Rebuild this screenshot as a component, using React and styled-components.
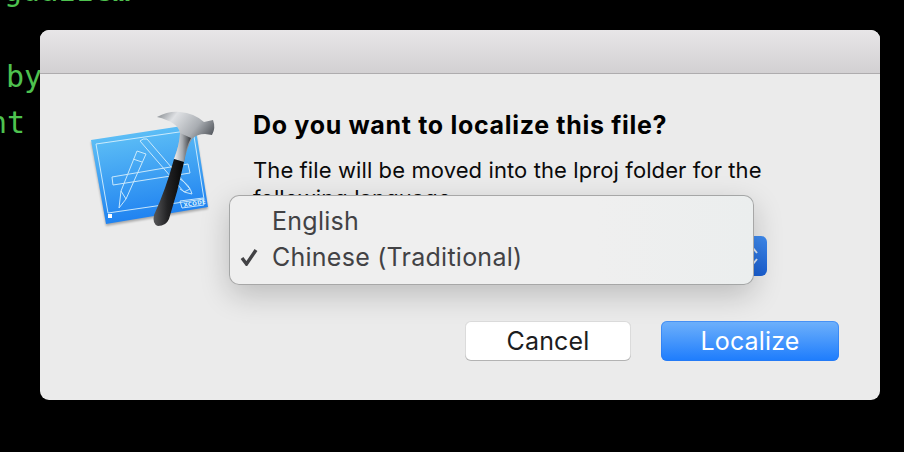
import React from "react";
import styled, { createGlobalStyle } from "styled-components";

const Global = createGlobalStyle`
  html, body { margin: 0; padding: 0; background: #000; }
  body { font-family: Inter, "Liberation Sans", sans-serif; }
`;

const Screen = styled.div`
  position: relative;
  width: 904px;
  height: 452px;
  overflow: hidden;
  background: #000;
  padding: 30px 24px 0 40px;
  box-sizing: border-box;
`;

const CodeLine = styled.div`
  position: absolute;
  left: ${(p) => p.$x}px;
  top: ${(p) => p.$y}px;
  font-family: "DejaVu Sans Mono", monospace;
  font-size: 30px;
  line-height: 32px;
  color: #4ec24f;
  white-space: pre;
`;

const Dialog = styled.div`
  position: relative;
  width: 840px;
  height: 370px;
  border-radius: 9px;
  overflow: hidden;
  background: #ebebeb;
  display: flex;
  flex-direction: column;
`;

const TitleBar = styled.div`
  height: 44px;
  flex: none;
  box-sizing: border-box;
  background: linear-gradient(#e8e6e8, #d2d0d2);
  border-bottom: 1px solid #aeacae;
`;

const Body = styled.div`
  flex: 1;
  display: flex;
  padding: 36px 41px 39px 50px;
  min-height: 0;
`;

const IconColumn = styled.div`
  width: 163px;
  flex: none;
`;

const Content = styled.div`
  flex: 1;
  display: flex;
  flex-direction: column;
  min-width: 0;
`;

const Heading = styled.h1`
  margin: 0;
  font-size: 25px;
  line-height: 30px;
  font-weight: 700;
  color: #000;
  letter-spacing: 0.68px;
`;

const Message = styled.p`
  margin: 16px 0 0;
  width: 530px;
  font-size: 22px;
  line-height: 28px;
  color: #0a0a0a;
  letter-spacing: 0.1px;
`;

const Buttons = styled.div`
  margin-top: auto;
  display: flex;
  justify-content: flex-end;
  gap: 30px;
`;

const Button = styled.div`
  width: ${(p) => p.$w}px;
  height: 40px;
  box-sizing: border-box;
  border-radius: 6px;
  display: flex;
  align-items: center;
  justify-content: center;
  font-size: 25px;
  letter-spacing: 0.15px;
  background: ${(p) => (p.$primary ? "linear-gradient(#6fb1fb, #1d7cfd)" : "#fff")};
  color: ${(p) => (p.$primary ? "#fff" : "#1c1c20")};
  box-shadow: ${(p) =>
    p.$primary
      ? "inset 0 0 0 1px rgba(40,120,240,.55)"
      : "inset 0 0 0 1px rgba(0,0,0,.14), inset 0 -1px 0 rgba(0,0,0,.18)"};
`;

const Stepper = styled.div`
  position: absolute;
  left: 690px;
  top: 206px;
  width: 37px;
  height: 40px;
  border-radius: 6px;
  background: linear-gradient(#3f8bf0, #1a5fd2);
  display: flex;
  align-items: center;
  justify-content: flex-end;
  padding-right: 8px;
  box-sizing: border-box;
`;

const Menu = styled.div`
  position: absolute;
  left: 189px;
  top: 165px;
  width: 525px;
  height: 90px;
  box-sizing: border-box;
  padding-top: 7px;
  border-radius: 10px;
  background: linear-gradient(90deg, #efefef 70%, #ebeeee);
  border: 1px solid rgba(0, 0, 0, 0.3);
  box-shadow: 0 10px 30px rgba(0, 0, 0, 0.2);
`;

const MenuItem = styled.div`
  display: flex;
  align-items: center;
  height: 36px;
  font-size: 25px;
  letter-spacing: 0.25px;
  color: #424245;
`;

const CheckSlot = styled.span`
  width: 42px;
  flex: none;
  display: flex;
  justify-content: flex-end;
  padding-right: 14px;
  box-sizing: border-box;
`;

const IconBox = styled.svg`
  display: block;
  margin: -9px 0 0 -10px;
`;

const XText = styled.text`
  font-family: "DejaVu Sans", sans-serif;
  font-size: 5.5px;
  font-weight: 700;
  fill: #d8f0fc;
  letter-spacing: 0.3px;
`;

const XcodeIcon = () => (
  <IconBox width="150" height="135" viewBox="0 0 150 135">
    <defs>
      <linearGradient id="bp" x1="0.4" y1="0" x2="0.6" y2="1">
        <stop offset="0" stopColor="#62c3f6" />
        <stop offset="1" stopColor="#1a7df0" />
      </linearGradient>
      <linearGradient id="head" x1="0" y1="0" x2="1" y2="0.7">
        <stop offset="0" stopColor="#7f8489" />
        <stop offset="0.25" stopColor="#dfe1e4" />
        <stop offset="0.6" stopColor="#a9adb2" />
        <stop offset="0.85" stopColor="#5a5e64" />
        <stop offset="1" stopColor="#a0a4a8" />
      </linearGradient>
      <linearGradient id="neck" x1="0" y1="0" x2="1" y2="0">
        <stop offset="0" stopColor="#f2f3f4" />
        <stop offset="0.5" stopColor="#a4a8ad" />
        <stop offset="1" stopColor="#33363a" />
      </linearGradient>
      <linearGradient id="handle" x1="0" y1="0" x2="1" y2="0">
        <stop offset="0" stopColor="#58585a" />
        <stop offset="0.45" stopColor="#232325" />
        <stop offset="1" stopColor="#060606" />
      </linearGradient>
      <filter id="soft" x="-10%" y="-10%" width="120%" height="120%">
        <feGaussianBlur stdDeviation="1.3" />
      </filter>
    </defs>
    <path d="M11 39 L115 25 L128 106 L26 123 Z" fill="#000" opacity=".28" filter="url(#soft)" transform="translate(0 2)" />
    <path d="M11 39 L115 23 L128 106 L26 123 Z" fill="url(#bp)" />
    <g fill="none" stroke="#d8f0fc" strokeWidth="1" opacity=".9">
      <path d="M16 43 L113 29 L124 98 L28 112 Z" />
      <path d="M32 76 L108 63 L110 72 L33 84 Z" />
      <path d="M60 40 Q63 37 67 38 L110 88 L104 91 Z" />
      <path d="M57 50 L66 53 L46 98 L39 107 L41 90 Z" />
      <path d="M41 90 L46 98 M53 58 L62 61" />
      <path d="M100 78 Q110 84 112 93 Q104 92 100 88" />
      <path d="M100 100 L123 97 L124 104 L102 107 Z" />
    </g>
    <rect x="28" y="113" width="4" height="4" fill="#fff" />
    <XText x="104" y="106" transform="rotate(-9 104 106)">XCODE</XText>
    <path d="M77 16 Q88 10 100 11 Q114 12 124 21 L133 19 Q136 27 132 34 L125 33 Q117 33 112 38 Q107 46 104 61 L94 58 Q100 42 100 32 Q98 21 77 16 Z" fill="url(#head)" />
    <path d="M94 58 Q100 42 100 32 L111 37 Q106 46 104 61 Z" fill="url(#neck)" />
    <path d="M94 58 L104 61 Q98 90 89 118 Q86 125 78 125 Q72 123 74 114 Q86 88 94 58 Z" fill="url(#handle)" />
  </IconBox>
);

const Check = () => (
  <svg width="18" height="18" viewBox="0 0 18 18">
    <path d="M2 10 L6.5 16 L16 2" fill="none" stroke="#424245" strokeWidth="3.4" />
  </svg>
);

const Chevrons = () => (
  <svg width="12" height="28" viewBox="0 0 12 28">
    <path d="M2 11 L6 6 L10 11 M2 17 L6 22 L10 17" fill="none" stroke="#dfe8f7" strokeWidth="2" />
  </svg>
);

export default function App() {
  return (
    <Screen>
      <Global />
      <CodeLine $x={-14} $y={-25}>rgdazze…</CodeLine>
      <CodeLine $x={6} $y={61}>by</CodeLine>
      <CodeLine $x={-11} $y={107}>nt</CodeLine>
      <Dialog>
        <TitleBar />
        <Body>
          <IconColumn>
            <XcodeIcon />
          </IconColumn>
          <Content>
            <Heading>Do you want to localize this file?</Heading>
            <Message>The file will be moved into the lproj folder for the following language.</Message>
            <Buttons>
              <Button $w={166}>Cancel</Button>
              <Button $w={178} $primary>Localize</Button>
            </Buttons>
          </Content>
        </Body>
        <Stepper><Chevrons /></Stepper>
        <Menu>
          <MenuItem><CheckSlot />English</MenuItem>
          <MenuItem><CheckSlot><Check /></CheckSlot>Chinese (Traditional)</MenuItem>
        </Menu>
      </Dialog>
    </Screen>
  );
}
